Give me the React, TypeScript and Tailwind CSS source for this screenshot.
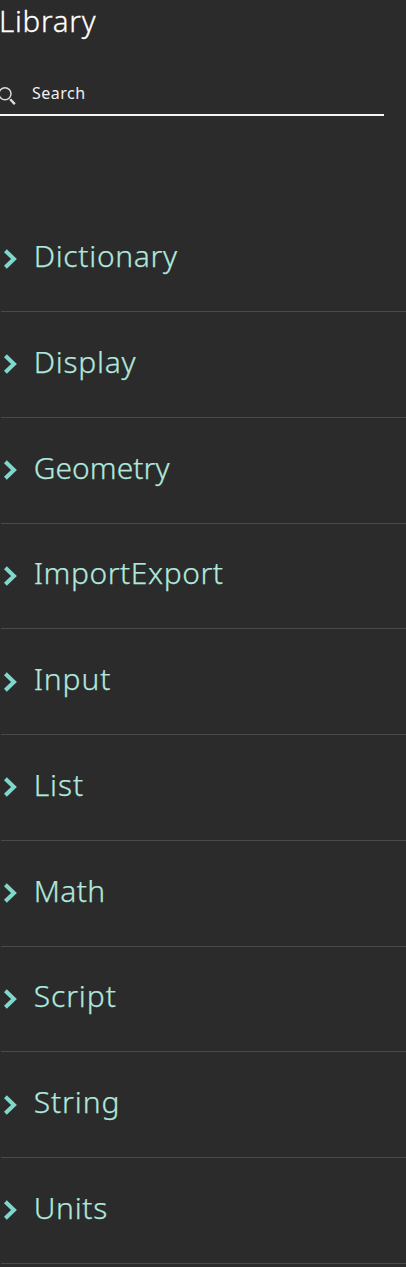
const items = [
  { name: 'Dictionary', tracking: 'tracking-[0.68px]' },
  { name: 'Display', tracking: 'tracking-[0.75px]' },
  { name: 'Geometry', tracking: 'tracking-[0.05px]' },
  { name: 'ImportExport', tracking: 'tracking-[0.55px]' },
  { name: 'Input', tracking: 'tracking-[0.85px]' },
  { name: 'List', tracking: 'tracking-[0.9px]' },
  { name: 'Math', tracking: 'tracking-[0.4px]' },
  { name: 'Script', tracking: 'tracking-[0.9px]' },
  { name: 'String', tracking: 'tracking-[0.9px]' },
  { name: 'Units', tracking: 'tracking-[0.7px]' },
];

function Chevron() {
  return (
    <svg className="mt-px h-5 w-[15px] shrink-0" viewBox="0 0 15 20" fill="none" stroke="#80d8cc" strokeWidth="4">
      <path d="M2.4 1.7 11 10 2.4 18.3" />
    </svg>
  );
}

export default function App() {
  return (
    <div className="flex h-[1267px] w-full flex-col overflow-hidden bg-[#2b2b2b] font-['Noto_Sans',sans-serif]">
      <h1 className="-ml-px h-[82px] shrink-0 pt-px text-[29.5px] leading-[40px] font-light tracking-[0.75px] text-white [-webkit-text-stroke:0.3px]">Library</h1>
      <label className="flex h-[34px] w-[384px] shrink-0 border-b-2 border-[#f5f5f5]">
        <svg className="mt-[4px] h-5 w-[32px] shrink-0" viewBox="0 0 32 20" fill="none" stroke="#dcdcdc">
          <circle cx="5" cy="7.8" r="6" strokeWidth="1.5" />
          <path d="m10.2 13.2 4.6 4.9" strokeWidth="2.4" />
        </svg>
        <span className="text-[16px] leading-[22px] tracking-[0.5px] text-[#f0f0f0]">Search</span>
      </label>
      <ul className="mt-[90.35px] flex flex-col">
        {items.map(({ name, tracking }) => (
          <li key={name} className="ml-px flex h-[105.75px] shrink-0 items-center border-b border-[#4a4a4a] pb-px pl-[2px]">
            <Chevron />
            <span className={`ml-[15.7px] -mt-[4px] text-[30px] leading-[40px] font-light text-[#b0e8df] [-webkit-text-stroke:0.25px] ${tracking}`}>{name}</span>
          </li>
        ))}
      </ul>
    </div>
  );
}
